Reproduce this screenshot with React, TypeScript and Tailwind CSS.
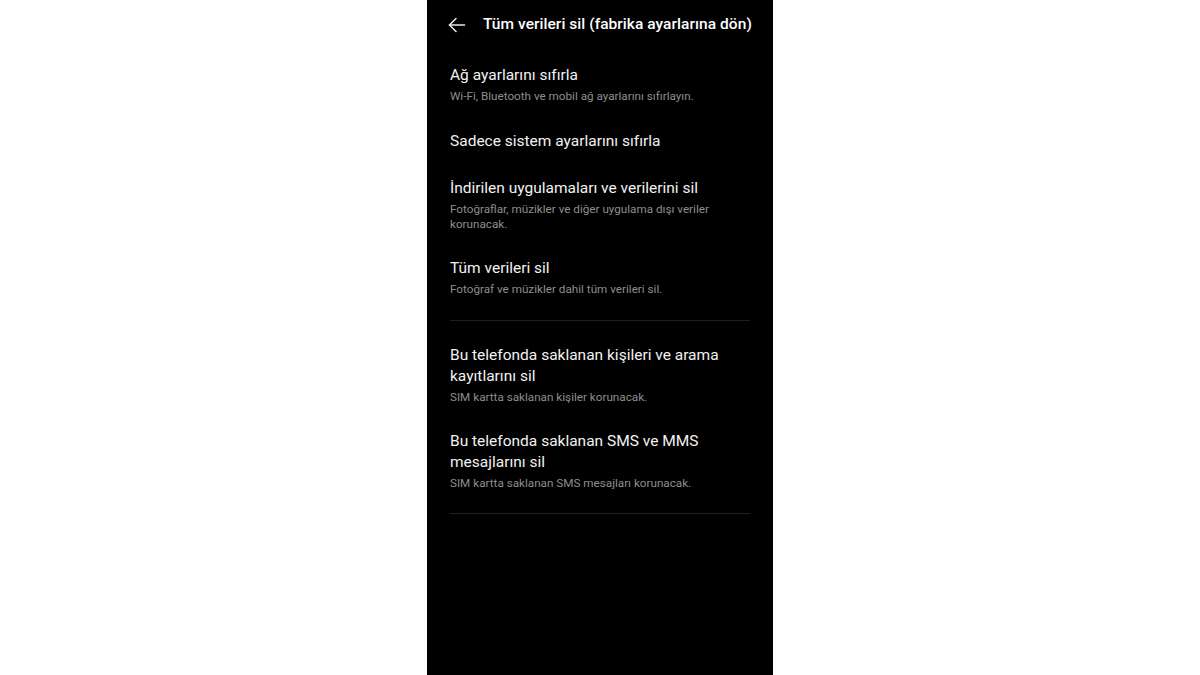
import React from 'react';

type Item = { title: string; sub?: string };

const groupA: Item[] = [
  { title: 'Ağ ayarlarını sıfırla', sub: 'Wi-Fi, Bluetooth ve mobil ağ ayarlarını sıfırlayın.' },
  { title: 'Sadece sistem ayarlarını sıfırla' },
  {
    title: 'İndirilen uygulamaları ve verilerini sil',
    sub: 'Fotoğraflar, müzikler ve diğer uygulama dışı veriler korunacak.',
  },
  { title: 'Tüm verileri sil', sub: 'Fotoğraf ve müzikler dahil tüm verileri sil.' },
];

const groupB: Item[] = [
  {
    title: 'Bu telefonda saklanan kişileri ve arama kayıtlarını sil',
    sub: 'SIM kartta saklanan kişiler korunacak.',
  },
  {
    title: 'Bu telefonda saklanan SMS ve MMS mesajlarını sil',
    sub: 'SIM kartta saklanan SMS mesajları korunacak.',
  },
];

const Row: React.FC<{ item: Item }> = ({ item }) => (
  <div className={item.sub ? 'py-[13px]' : 'pt-[14px] pb-[13px]'}>
    <div className="text-[15.5px] leading-[21px] text-[#f2f2f2]">{item.title}</div>
    {item.sub && (
      <div className="mt-[3px] text-[11.7px] leading-[15px] text-[#8e8e8e]">{item.sub}</div>
    )}
  </div>
);

export default function App() {
  return (
    <div className="min-h-screen bg-white flex justify-center" style={{ fontFamily: 'Roboto, "Noto Sans", sans-serif' }}>
      <div className="w-[346px] h-[675px] bg-black">
        <div className="h-[46px] pt-[4px] flex items-center pl-[21px] pr-2">
          <svg className="shrink-0" width="18" height="16" viewBox="0 0 18 16" fill="none" stroke="#e8e8e8" strokeWidth="1.6" strokeLinecap="round" strokeLinejoin="round">
            <path d="M16.5 8H1.5" />
            <path d="M8 1.5L1.5 8L8 14.5" />
          </svg>
          <span className="ml-[17px] text-[15.5px] font-medium text-white whitespace-nowrap tracking-[0.05px]">
            Tüm verileri sil (fabrika ayarlarına dön)
          </span>
        </div>
        <div className="pt-[6px] px-[23px]">
          {groupA.map((it) => (
            <Row key={it.title} item={it} />
          ))}
          <div className="mt-[10px] mb-[11px] h-px bg-[#1f1f1f]" />
          {groupB.map((it) => (
            <Row key={it.title} item={it} />
          ))}
          <div className="mt-[9px] h-px bg-[#1f1f1f]" />
        </div>
      </div>
    </div>
  );
}
